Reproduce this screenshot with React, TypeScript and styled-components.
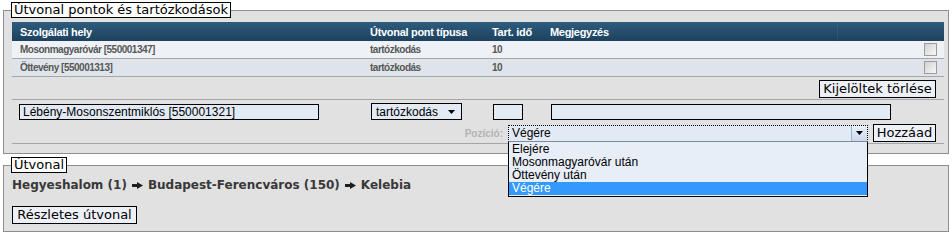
import styled, { createGlobalStyle } from "styled-components";

const GlobalStyle = createGlobalStyle`
  body {
    margin: 0;
    background: #ffffff;
    font-family: "DejaVu Sans", Verdana, sans-serif;
  }
`;

const Page = styled.div`
  width: 952px;
  height: 233px;
  padding-top: 2px;
  box-sizing: border-box;
  overflow: hidden;
`;

const Fieldset = styled.fieldset<{ $gap?: number; $pb?: number }>`
  margin: ${(p) => p.$gap ?? 0}px 3px 0 3px;
  padding: 4px 4px ${(p) => p.$pb ?? 9}px 8px;
  border: 1px solid #8e8e8e;
  background: #e1e1e1;
  min-width: 0;
`;

const Legend = styled.legend`
  margin-left: -1px;
  padding: 0 2px;
  border: 1px solid #000;
  background: #fff;
  color: #000;
  font-size: 13px;
  line-height: 14px;
`;

const COLS = "350px 122px 58px 295px 107px";

const HeadRow = styled.div`
  display: grid;
  grid-template-columns: ${COLS};
  height: 19px;
  align-items: center;
  background: linear-gradient(#2e5c7d, #1d415e);
  color: #fff;
  font-family: "Liberation Sans", Arial, sans-serif;
  font-weight: bold;
  font-size: 11px;
  letter-spacing: -0.3px;
`;

const Cell = styled.div<{ $last?: boolean }>`
  padding-left: 8px;
  height: 100%;
  display: flex;
  align-items: center;
  justify-content: ${(p) => (p.$last ? "flex-end" : "flex-start")};
  padding-right: ${(p) => (p.$last ? "7px" : "0")};
  border-left: ${(p) => (p.$last ? "1px solid rgba(255,255,255,0.06)" : "none")};
`;

const DataRow = styled.div<{ $alt?: boolean }>`
  display: grid;
  grid-template-columns: ${COLS};
  height: 17px;
  border-bottom: 1px solid #a3a7ab;
  background: ${(p) => (p.$alt ? "#dfe4ea" : "#eef2f7")};
  color: #575757;
  font-family: "Liberation Sans", Arial, sans-serif;
  font-weight: bold;
  font-size: 10px;
  letter-spacing: -0.5px;
`;

const Check = styled.input.attrs({ type: "checkbox" })`
  appearance: none;
  margin: 0;
  width: 13px;
  height: 13px;
  border: 1px solid #9c9c9c;
  background: linear-gradient(135deg, #d2d2d2, #f7f7f7);
  box-sizing: border-box;
`;

const ActionRow = styled.div`
  display: flex;
  justify-content: flex-end;
  padding: 3px 8px 1px 0;
  border-bottom: 1px solid #a3a7ab;
`;

const Button = styled.button<{ $w: number }>`
  width: ${(p) => p.$w}px;
  height: 18px;
  margin: 0;
  padding: 0;
  border: 1px solid #000;
  background: #edf1f7;
  color: #000;
  font-family: "DejaVu Sans", Verdana, sans-serif;
  font-size: 13px;
  line-height: 16px;
  text-align: center;
`;

const FormArea = styled.div`
  display: flex;
  flex-direction: column;
  gap: 4px;
  padding: 3px 0 1px 0;
  border-bottom: 1px solid #a3a7ab;
`;

const InputRow = styled.div`
  display: flex;
  align-items: center;
  height: 17px;
  padding-left: 7px;
`;

const TextBox = styled.div<{ $w: number; $ml: number }>`
  width: ${(p) => p.$w}px;
  height: 16px;
  margin-left: ${(p) => p.$ml}px;
  box-sizing: border-box;
  border: 1px solid #000;
  background: #e2eaf5;
  color: #000;
  font-family: "Liberation Sans", Arial, sans-serif;
  font-size: 12px;
  line-height: 14px;
  padding-left: 3px;
  white-space: nowrap;
  overflow: hidden;
`;

const SmallSelect = styled.div`
  width: 91px;
  height: 17px;
  margin-left: 52px;
  box-sizing: border-box;
  border: 1px solid #000;
  background: #e2eaf5;
  display: flex;
  align-items: center;
  justify-content: space-between;
  padding: 0 6px 0 4px;
  font-family: "Liberation Sans", Arial, sans-serif;
  font-size: 12px;
  color: #000;
`;

const PosRow = styled.div`
  display: flex;
  justify-content: flex-end;
  align-items: center;
  height: 18px;
  padding-right: 8px;
`;

const PosLabel = styled.span`
  margin-right: 5px;
  color: #b3b3b3;
  font-family: "Liberation Sans", Arial, sans-serif;
  font-weight: bold;
  font-size: 10px;
`;

const Combo = styled.div`
  position: relative;
  width: 360px;
  height: 17px;
  margin-right: 5px;
  box-sizing: border-box;
  border: 1px dotted #000;
  background: #e2eaf5;
  display: flex;
  align-items: center;
  font-family: "Liberation Sans", Arial, sans-serif;
  font-size: 12px;
  color: #000;
`;

const ComboText = styled.span`
  flex: 1;
  padding-left: 3px;
`;

const ComboButton = styled.span`
  width: 15px;
  height: 15px;
  display: flex;
  align-items: center;
  justify-content: center;
  background: linear-gradient(#e9f0f9, #c9d8ec);
  border-left: 1px solid #9fb3cc;
`;

const OptionList = styled.ul`
  position: absolute;
  top: 15px;
  left: -1px;
  width: 360px;
  margin: 0;
  padding: 1px 0 1px 0;
  list-style: none;
  box-sizing: border-box;
  border: 1px solid #000;
  border-top-color: #7d8a99;
  background: #e8eef8;
  z-index: 2;
`;

const Option = styled.li<{ $active?: boolean }>`
  height: 13px;
  line-height: 13px;
  padding-left: 3px;
  background: ${(p) => (p.$active ? "#3399ff" : "transparent")};
  color: ${(p) => (p.$active ? "#fff" : "#000")};
`;

const Route = styled.div`
  display: flex;
  align-items: center;
  gap: 5px;
  height: 16px;
  margin: 0 0 11px 0;
  color: #383838;
  font-family: "DejaVu Sans", Verdana, sans-serif;
  font-weight: bold;
  font-size: 12px;
  white-space: nowrap;
`;

const Arrow = () => (
  <svg width="11" height="7" viewBox="0 0 11 7">
    <rect x="0" y="2" width="6" height="3" fill="#1e1e1e" />
    <polygon points="5,0 11,3.5 5,7" fill="#1e1e1e" />
  </svg>
);

const Caret = () => (
  <svg width="7" height="4" viewBox="0 0 7 4">
    <polygon points="0,0 7,0 3.5,4" fill="#000" />
  </svg>
);

const rows = [
  { place: "Mosonmagyaróvár [550001347]", type: "tartózkodás", time: "10" },
  { place: "Öttevény [550001313]", type: "tartózkodás", time: "10" },
];

const options = ["Elejére", "Mosonmagyaróvár után", "Öttevény után", "Végére"];

export default function App() {
  return (
    <Page>
      <GlobalStyle />
      <Fieldset>
        <Legend>Útvonal pontok és tartózkodások</Legend>
        <HeadRow>
          <Cell>Szolgálati hely</Cell>
          <Cell>Útvonal pont típusa</Cell>
          <Cell>Tart. idő</Cell>
          <Cell>Megjegyzés</Cell>
          <Cell $last />
        </HeadRow>
        {rows.map((r, i) => (
          <DataRow key={r.place} $alt={i % 2 === 1}>
            <Cell>{r.place}</Cell>
            <Cell>{r.type}</Cell>
            <Cell>{r.time}</Cell>
            <Cell />
            <Cell $last>
              <Check />
            </Cell>
          </DataRow>
        ))}
        <ActionRow>
          <Button $w={117}>Kijelöltek törlése</Button>
        </ActionRow>
        <FormArea>
          <InputRow>
            <TextBox $w={300} $ml={0}>
              Lébény-Mosonszentmiklós [550001321]
            </TextBox>
            <SmallSelect>
              <span>tartózkodás</span>
              <Caret />
            </SmallSelect>
            <TextBox $w={30} $ml={31} />
            <TextBox $w={340} $ml={28} />
          </InputRow>
          <PosRow>
            <PosLabel>Pozíció:</PosLabel>
            <Combo>
              <ComboText>Végére</ComboText>
              <ComboButton>
                <Caret />
              </ComboButton>
              <OptionList>
                {options.map((o) => (
                  <Option key={o} $active={o === "Végére"}>
                    {o}
                  </Option>
                ))}
              </OptionList>
            </Combo>
            <Button $w={63}>Hozzáad</Button>
          </PosRow>
        </FormArea>
      </Fieldset>
      <Fieldset $gap={3} $pb={7}>
        <Legend>Útvonal</Legend>
        <Route>
          <span>Hegyeshalom (1)</span>
          <Arrow />
          <span>Budapest-Ferencváros (150)</span>
          <Arrow />
          <span>Kelebia</span>
        </Route>
        <Button $w={125}>Részletes útvonal</Button>
      </Fieldset>
    </Page>
  );
}
